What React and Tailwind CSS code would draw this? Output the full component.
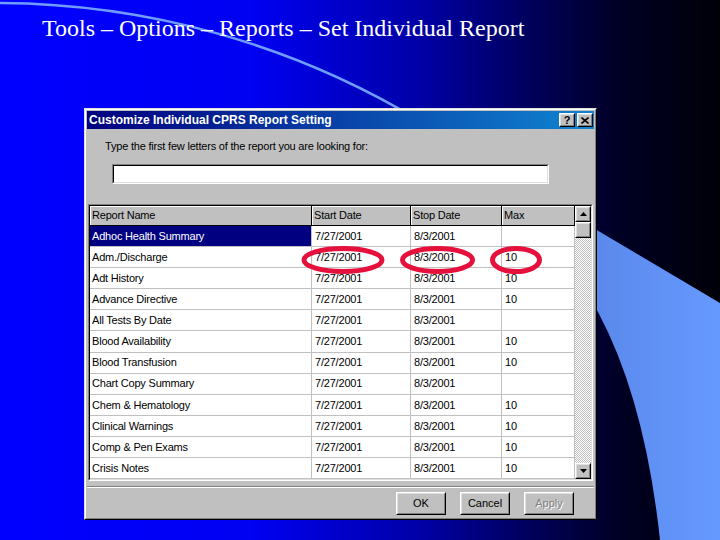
import React from 'react';

const rows = [
  ['Adhoc Health Summary', '7/27/2001', '8/3/2001', ''],
  ['Adm./Discharge', '7/27/2001', '8/3/2001', '10'],
  ['Adt History', '7/27/2001', '8/3/2001', '10'],
  ['Advance Directive', '7/27/2001', '8/3/2001', '10'],
  ['All Tests By Date', '7/27/2001', '8/3/2001', ''],
  ['Blood Availability', '7/27/2001', '8/3/2001', '10'],
  ['Blood Transfusion', '7/27/2001', '8/3/2001', '10'],
  ['Chart Copy Summary', '7/27/2001', '8/3/2001', ''],
  ['Chem & Hematology', '7/27/2001', '8/3/2001', '10'],
  ['Clinical Warnings', '7/27/2001', '8/3/2001', '10'],
  ['Comp & Pen Exams', '7/27/2001', '8/3/2001', '10'],
  ['Crisis Notes', '7/27/2001', '8/3/2001', '10'],
];

const colWidths = ['w-[222px]', 'w-[99px]', 'w-[91px]', 'w-[73px]'];

// classic raised 3d button frame
const Bevel = ({ className = '', children }) => (
  <div className={`border border-t-white border-l-white border-r-black border-b-black ${className}`}>
    <div className="w-full h-full border border-t-[#dfdfdf] border-l-[#dfdfdf] border-r-[#808080] border-b-[#808080] bg-[#c0c0c0] flex items-center justify-center">
      {children}
    </div>
  </div>
);

const Arrow = ({ down }) => (
  <svg width="7" height="4" viewBox="0 0 7 4">
    <polygon points={down ? '0,0 7,0 3.5,4' : '0,4 7,4 3.5,0'} fill="#000" />
  </svg>
);

const App = () => {
  return (
    <div className="relative w-[720px] h-[540px] overflow-hidden bg-[linear-gradient(to_right,#0000ff_0%,#0000f2_35%,#0000a8_58%,#000064_72%,#000024_86%,#000008_100%)] font-['Liberation_Sans',Arial,sans-serif]">
      {/* background decoration */}
      <svg className="absolute inset-0" width="720" height="540" viewBox="0 0 720 540">
        <defs>
          <linearGradient id="swoosh" x1="0" x2="1" y1="0" y2="0">
            <stop offset="0" stopColor="#5a88ea" />
            <stop offset="1" stopColor="#6699ff" />
          </linearGradient>
        </defs>
        <path d="M0 3 A822 822 0 0 1 420 121" fill="none" stroke="#6f9dff" strokeWidth="2.5" />
        <path d="M590 226 L720 303 L720 540 L660 540 Q645 400 598 312 L590 300 Z" fill="url(#swoosh)" />
      </svg>

      <div className="relative">
        <h1 className="pl-[42px] pt-[14px] text-[24px] leading-[28px] text-white font-['Liberation_Serif','Times_New_Roman',serif]">
          Tools – Options – Reports – Set Individual Report
        </h1>

        {/* dialog */}
        <div className="ml-[84px] mt-[66px] w-[513px] border border-t-[#dfdfdf] border-l-[#dfdfdf] border-r-black border-b-black">
          <div className="border border-t-white border-l-white border-r-[#808080] border-b-[#808080] bg-[#c0c0c0] p-px">
            {/* title bar */}
            <div className="h-[18px] flex items-center justify-between pl-[2px] pr-px bg-[linear-gradient(to_right,#000080,#1084d0)]">
              <span className="text-white font-bold text-[12px] leading-none">Customize Individual CPRS Report Setting</span>
              <div className="flex gap-[2px]">
                <Bevel className="w-[16px] h-[14px]">
                  <span className="font-bold text-[11px] leading-none text-black">?</span>
                </Bevel>
                <Bevel className="w-[16px] h-[14px]">
                  <svg width="8" height="7" viewBox="0 0 8 7">
                    <path d="M0.5 0.5 L7.5 6.5 M7.5 0.5 L0.5 6.5" stroke="#000" strokeWidth="1.6" />
                  </svg>
                </Bevel>
              </div>
            </div>

            <p className="mt-[11px] pl-[18px] text-[11px] leading-[13px] tracking-[-0.2px] text-black">
              Type the first few letters of the report you are looking for:
            </p>

            <div className="mt-[11px] ml-[25px] w-[437px] h-[20px] border border-t-[#808080] border-l-[#808080] border-r-white border-b-white">
              <div className="w-full h-full bg-white border border-t-black border-l-black border-r-[#dfdfdf] border-b-[#dfdfdf]" />
            </div>

            {/* report grid */}
            <div className="mt-[20px] ml-px w-[505px] h-[277px] border border-t-[#808080] border-l-[#808080] border-r-white border-b-white">
              <div className="w-full h-full border border-t-black border-l-black border-r-[#dfdfdf] border-b-[#dfdfdf] flex bg-white overflow-hidden">
                <div className="w-[485px] text-[11px] tracking-[-0.2px] text-black">
                  <div className="flex h-[20px]">
                    {['Report Name', 'Start Date', 'Stop Date', 'Max'].map((h, i) => (
                      <div
                        key={h}
                        className={`${colWidths[i]} h-full flex items-center pl-[2px] bg-[#c0c0c0] border-r border-b border-black shadow-[inset_1px_1px_0_#fff]`}
                      >
                        {h}
                      </div>
                    ))}
                  </div>
                  {rows.map((r, ri) => (
                    <div key={r[0]} className="flex h-[21.1px]">
                      {r.map((c, ci) => (
                        <div
                          key={ci}
                          className={`${colWidths[ci]} h-full flex items-center border-r border-b border-[#c0c0c0] ${ci === 0 ? 'pl-[2px]' : 'pl-[3px]'} ${ri === 0 && ci === 0 ? 'bg-[#000080] text-white' : ''}`}
                        >
                          {c}
                        </div>
                      ))}
                    </div>
                  ))}
                </div>

                {/* scrollbar */}
                <div className="w-[16px] flex flex-col">
                  <Bevel className="w-[16px] h-[16px]">
                    <Arrow />
                  </Bevel>
                  <Bevel className="w-[16px] h-[16px]" />
                  <div className="flex-1 bg-[repeating-conic-gradient(#c0c0c0_0%_25%,#ffffff_0%_50%)] bg-[length:2px_2px]" />
                  <Bevel className="w-[16px] h-[16px]">
                    <Arrow down />
                  </Bevel>
                </div>
              </div>
            </div>

            <div className="mt-[5px] h-[2px] border-t border-b border-t-[#808080] border-b-white" />

            <div className="mt-[4px] pb-[2px] pr-[20px] flex justify-end gap-[14px] text-[11px]">
              <Bevel className="w-[50px] h-[23px]">
                <span className="text-black">OK</span>
              </Bevel>
              <Bevel className="w-[50px] h-[23px]">
                <span className="text-black">Cancel</span>
              </Bevel>
              <Bevel className="w-[50px] h-[23px]">
                <span className="text-[#808080] [text-shadow:1px_1px_0_#fff]">Apply</span>
              </Bevel>
            </div>
          </div>
        </div>
      </div>

      {/* red circles drawn over the grid */}
      <svg className="absolute inset-0 pointer-events-none" width="720" height="540" viewBox="0 0 720 540">
        <ellipse cx="343" cy="260" rx="39" ry="11.5" fill="none" stroke="#e5103c" strokeWidth="5" />
        <ellipse cx="437.5" cy="260" rx="35" ry="11.5" fill="none" stroke="#e5103c" strokeWidth="5" />
        <ellipse cx="516" cy="260" rx="23.5" ry="11.5" fill="none" stroke="#e5103c" strokeWidth="5" />
      </svg>
    </div>
  );
};

export default App;
